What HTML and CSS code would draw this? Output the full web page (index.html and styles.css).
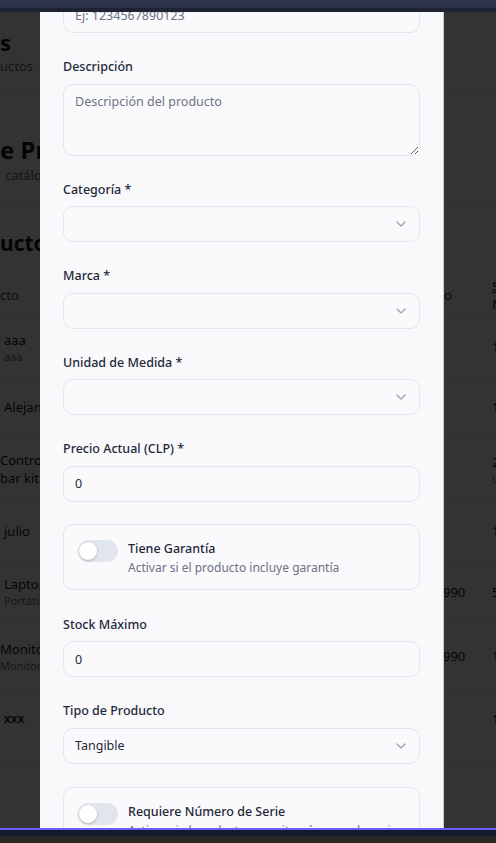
FILE: index.html
```html
<!DOCTYPE html>
<html lang="es">
<head>
<meta charset="utf-8">
<title>Nuevo Producto</title>
<link rel="stylesheet" href="styles.css">
</head>
<body>
<div class="screen">
  <div class="page">
    <div class="page-head">
      <div class="pg-h1">s</div>
      <div class="pg-sub">uctos</div>
    </div>
    <div class="hero">
      <div class="hero-title">e Productos</div>
      <div class="pg-sub hero-sub">catálogo</div>
    </div>
    <div class="card">
      <div class="card-title">uctos</div>
      <div class="row thead">
        <div class="c1">cto</div>
        <div class="c2">o</div>
        <div class="c3"><span class="u">S</span><span>N</span></div>
      </div>
      <div class="row r1">
        <div class="c1"><span class="nm">aaa</span><span class="sb">aaa</span></div>
        <div class="c2"></div>
        <div class="c3">1</div>
      </div>
      <div class="row r2">
        <div class="c1"><span class="nm">Alejandro</span></div>
        <div class="c2"></div>
        <div class="c3">1</div>
      </div>
      <div class="row r3">
        <div class="c1 flush"><span class="nm">Controller</span><span class="nm">bar kit</span></div>
        <div class="c2"></div>
        <div class="c3"><span>2</span><span class="sb">u</span></div>
      </div>
      <div class="row r4">
        <div class="c1"><span class="nm">julio</span></div>
        <div class="c2"></div>
        <div class="c3">1</div>
      </div>
      <div class="row r5">
        <div class="c1"><span class="nm">Laptop</span><span class="sb">Portátil</span></div>
        <div class="c2">990</div>
        <div class="c3">5</div>
      </div>
      <div class="row r6">
        <div class="c1 flush"><span class="nm">Monitor</span><span class="sb">Monitor</span></div>
        <div class="c2">990</div>
        <div class="c3">1</div>
      </div>
      <div class="row r7">
        <div class="c1"><span class="nm bold">xxx</span></div>
        <div class="c2"></div>
        <div class="c3">1</div>
      </div>
    </div>
  </div>

  <div class="overlay"></div>

  <div class="modal">
    <div class="modal-body">
      <div class="field first">
        <input class="ctrl" type="text" placeholder="Ej: 1234567890123">
      </div>

      <div class="field">
        <label class="lbl">Descripción</label>
        <textarea class="ctrl area" placeholder="Descripción del producto"></textarea>
      </div>

      <div class="field">
        <label class="lbl">Categoría *</label>
        <div class="sel-wrap">
          <select class="ctrl sel"><option></option></select>
          <svg class="chev" width="10" height="6" viewBox="0 0 10 6"><path d="M1 1l4 4 4-4" fill="none" stroke="#9ca3af" stroke-width="1.3" stroke-linecap="round" stroke-linejoin="round"/></svg>
        </div>
      </div>

      <div class="field">
        <label class="lbl">Marca *</label>
        <div class="sel-wrap">
          <select class="ctrl sel"><option></option></select>
          <svg class="chev" width="10" height="6" viewBox="0 0 10 6"><path d="M1 1l4 4 4-4" fill="none" stroke="#9ca3af" stroke-width="1.3" stroke-linecap="round" stroke-linejoin="round"/></svg>
        </div>
      </div>

      <div class="field">
        <label class="lbl">Unidad de Medida *</label>
        <div class="sel-wrap">
          <select class="ctrl sel"><option></option></select>
          <svg class="chev" width="10" height="6" viewBox="0 0 10 6"><path d="M1 1l4 4 4-4" fill="none" stroke="#9ca3af" stroke-width="1.3" stroke-linecap="round" stroke-linejoin="round"/></svg>
        </div>
      </div>

      <div class="field">
        <label class="lbl">Precio Actual (CLP) *</label>
        <input class="ctrl" type="text" value="0">
      </div>

      <div class="switch-box box1">
        <span class="toggle"><span class="knob"></span></span>
        <div class="sw-text">
          <div class="sw-title">Tiene Garantía</div>
          <div class="sw-sub">Activar si el producto incluye garantía</div>
        </div>
      </div>

      <div class="field after-box">
        <label class="lbl">Stock Máximo</label>
        <input class="ctrl" type="text" value="0">
      </div>

      <div class="field">
        <label class="lbl">Tipo de Producto</label>
        <div class="sel-wrap">
          <select class="ctrl sel"><option>Tangible</option></select>
          <svg class="chev" width="10" height="6" viewBox="0 0 10 6"><path d="M1 1l4 4 4-4" fill="none" stroke="#9ca3af" stroke-width="1.3" stroke-linecap="round" stroke-linejoin="round"/></svg>
        </div>
      </div>

      <div class="switch-box box2">
        <span class="toggle"><span class="knob"></span></span>
        <div class="sw-text">
          <div class="sw-title">Requiere Número de Serie</div>
          <div class="sw-sub">Activar si el producto necesita números de serie</div>
        </div>
      </div>
    </div>
  </div>

  <div class="topbar"></div>
  <div class="taskbar"></div>
</div>
</body>
</html>
```
FILE: styles.css
```css
html, body {
  margin: 0;
  padding: 0;
  height: 100%;
  overflow: hidden;
}
body {
  font-family: "Noto Sans", "Segoe UI", sans-serif;
  background: #ffffff;
}
.screen {
  position: relative;
  width: 496px;
  height: 843px;
  overflow: hidden;
}

/* ---------- background page ---------- */
.page {
  color: #111827;
}
.page-head {
  height: 92px;
  box-sizing: border-box;
  padding-top: 28px;
  border-bottom: 1px solid #e5e7eb;
}
.pg-h1 {
  font-size: 22px;
  font-weight: 700;
  line-height: 28px;
}
.pg-sub {
  font-size: 13px;
  line-height: 18px;
  color: #6b7280;
  margin-top: 1px;
}
.hero {
  padding-top: 43px;
}
.hero-title {
  font-size: 24px;
  font-weight: 700;
  line-height: 30px;
  white-space: nowrap;
}
.hero-sub {
  margin-top: 1px;
  padding-left: 5px;
}
.card {
  margin-top: 23px;
  border-top: 1px solid #e5e7eb;
}
.card-title {
  height: 62px;
  box-sizing: border-box;
  padding-top: 22px;
  font-size: 21px;
  font-weight: 700;
  line-height: 26px;
}
.row {
  display: grid;
  grid-template-columns: 443px 49px 40px;
  align-items: center;
  border-bottom: 1px solid #e5e7eb;
  box-sizing: border-box;
  font-size: 13px;
  line-height: 18px;
}
.c1 {
  display: flex;
  flex-direction: column;
  padding-left: 4px;
  white-space: nowrap;
}
.c1.flush {
  padding-left: 0;
}
.c2 {
  white-space: nowrap;
}
.c3 {
  display: flex;
  flex-direction: column;
  white-space: nowrap;
}
.thead {
  height: 47px;
  padding-top: 3px;
  color: #374151;
}
.thead .c1 { padding-left: 0; }
.thead .c2 { padding-left: 1px; }
.thead .c3 { line-height: 18px; font-weight: 600; }
.u { text-decoration: underline; }
.nm { color: #111827; }
.nm.bold { font-weight: 600; font-size: 12px; }
.sb { font-size: 11px; line-height: 15px; color: #6b7280; }
.r1 { height: 61px; }
.r2 { height: 59px; }
.r3 { height: 65px; }
.r4 { height: 59px; }
.r5 { height: 62px; }
.r6 { height: 67px; }
.r7 { height: 78px; align-items: start; padding-top: 20px; }

/* ---------- overlay & chrome ---------- */
.overlay {
  position: absolute;
  inset: 0;
  background: rgba(0, 0, 0, 0.8);
}
.topbar {
  position: absolute;
  top: 0;
  left: 0;
  right: 0;
  height: 12px;
  background: linear-gradient(#30364e 0, #2c3249 8px, #1d2131 8px, #1f2333 12px);
}
.taskbar {
  position: absolute;
  left: 0;
  right: 0;
  bottom: 0;
  height: 15px;
  border-top: 2px solid #6a5cf6;
  box-sizing: border-box;
  background: linear-gradient(#111a2f 0, #111a2f 6px, #2a2623 6px);
}

/* ---------- modal ---------- */
.modal {
  position: absolute;
  left: 40px;
  top: 12px;
  bottom: 0;
  width: 404px;
  box-sizing: border-box;
  background: #f9f9fc;
  border-right: 1px solid #c9ccd4;
  overflow: hidden;
}
.modal-body {
  padding: 0 23px;
  display: flex;
  flex-direction: column;
}
.field {
  display: flex;
  flex-direction: column;
  margin-top: 25px;
}
.field.first {
  margin-top: -15px;
}
.field.after-box {
  margin-top: 26px;
}
.lbl {
  font-size: 12.5px;
  font-weight: 500;
  line-height: 17px;
  color: #1f2937;
  margin-bottom: 8.5px;
}
.ctrl {
  box-sizing: border-box;
  width: 100%;
  height: 36px;
  margin: 0;
  padding: 0 11px;
  border: 1px solid #e3e6ed;
  border-radius: 10px;
  background: #fafafd;
  font-family: inherit;
  font-size: 12.5px;
  color: #1f2937;
  outline: none;
}
.ctrl::placeholder {
  color: #6b7383;
  opacity: 1;
}
.area {
  height: 72px;
  padding: 8px 11px;
  line-height: 17px;
  resize: vertical;
  display: block;
}
.sel-wrap {
  position: relative;
}
.sel {
  appearance: none;
  -webkit-appearance: none;
  display: block;
}
.chev {
  position: absolute;
  right: 14px;
  top: 15px;
}

/* ---------- switch boxes ---------- */
.switch-box {
  display: flex;
  align-items: flex-start;
  gap: 10px;
  box-sizing: border-box;
  height: 66px;
  padding: 14px 14px 12px;
  border: 1px solid #e3e6ed;
  border-radius: 10px;
  background: #fafafd;
}
.box1 { margin-top: 22px; }
.box2 { margin-top: 23px; }
.toggle {
  position: relative;
  flex: none;
  width: 40px;
  height: 22px;
  margin-top: 1px;
  border-radius: 11px;
  background: #e1e5ec;
}
.knob {
  position: absolute;
  left: 1px;
  top: 2px;
  width: 18px;
  height: 18px;
  border-radius: 50%;
  background: #ffffff;
  box-shadow: 0 1px 3px rgba(0, 0, 0, 0.22);
}
.sw-text {
  display: flex;
  flex-direction: column;
}
.sw-title {
  font-size: 12.5px;
  font-weight: 500;
  line-height: 19px;
  color: #1f2937;
}
.sw-sub {
  font-size: 12px;
  line-height: 19px;
  color: #6b7280;
}
```
